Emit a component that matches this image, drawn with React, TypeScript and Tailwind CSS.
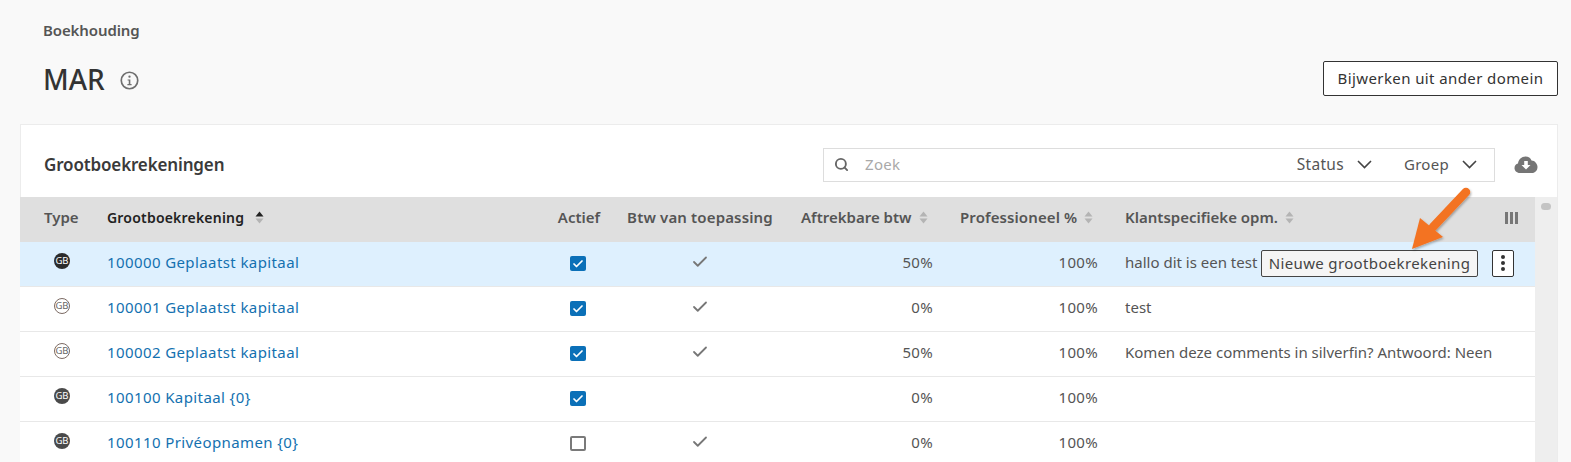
import React from "react";
import { Search, Check } from "lucide-react";

const rows = [
  { dark: "bg-[#2b2b2b]", outline: false, name: "100000 Geplaatst kapitaal", a: true, b: true, p: "50%", q: "100%", c: "hallo dit is een test", hi: true },
  { dark: "", outline: true, name: "100001 Geplaatst kapitaal", a: true, b: true, p: "0%", q: "100%", c: "test", hi: false },
  { dark: "", outline: true, name: "100002 Geplaatst kapitaal", a: true, b: true, p: "50%", q: "100%", c: "Komen deze comments in silverfin? Antwoord: Neen", hi: false },
  { dark: "bg-[#4a4a4a]", outline: false, name: "100100 Kapitaal {0}", a: true, b: false, p: "0%", q: "100%", c: "", hi: false },
  { dark: "bg-[#4a4a4a]", outline: false, name: "100110 Privéopnamen {0}", a: false, b: true, p: "0%", q: "100%", c: "", hi: false },
];

const cols = "grid grid-cols-[74px_447px_73px_172px_159px_165px_425px]";

function Sort({ active }: { active?: boolean }) {
  return (
    <svg width="9" height="13" viewBox="0 0 9 13" className={`${active ? "ml-[11px]" : "ml-[7px]"} shrink-0`}>
      <path d="M4.5 0.5 L8.5 5.5 H0.5 Z" fill={active ? "#222222" : "#b4b4b4"} />
      <path d="M4.5 12.5 L8.5 7.5 H0.5 Z" fill="#b4b4b4" />
    </svg>
  );
}

function Chevron() {
  return (
    <svg width="15" height="9" viewBox="0 0 15 9" className="shrink-0">
      <path d="M1 1 L7.5 7.5 L14 1" fill="none" stroke="#444444" strokeWidth="1.6" />
    </svg>
  );
}

function Badge({ cls, outline }: { cls: string; outline: boolean }) {
  return (
    <div
      className={`w-[16px] h-[16px] rounded-full flex items-center justify-center text-[9.5px] leading-none tracking-[-0.1px] ${
        outline ? "border border-[#7b6a63] text-[#666666] bg-white" : `${cls} text-white`
      }`}
    >
      GB
    </div>
  );
}

function Box({ on }: { on: boolean }) {
  return on ? (
    <div className="w-[16px] h-[15px] rounded-[2px] bg-[#0b70b8] flex items-center justify-center">
      <Check size={12} strokeWidth={3.5} className="text-white" />
    </div>
  ) : (
    <div className="w-[16px] h-[15px] rounded-[2px] border-2 border-[#7a7a7a] bg-white" />
  );
}

export default function App() {
  return (
    <div className="relative w-[1571px] h-[462px] overflow-hidden bg-[#f9f9f9] font-['Noto_Sans',sans-serif] text-[15px] tracking-[0.3px] text-[#555555]">
      <div className="pl-[43px] pt-[21px] text-[15px] tracking-[-0.1px] leading-[19px] font-semibold text-[#555555]">Boekhouding</div>
      <div className="flex items-start justify-between pl-[43px] pr-[13px] mt-[21px] h-[36px]">
        <div className="flex items-center h-[36px]">
          <span className="text-[28px] tracking-normal font-medium leading-none text-[#333333]">MAR</span>
          <svg width="19" height="19" viewBox="0 0 18 18" className="ml-[15px] mt-[2px]">
            <circle cx="9" cy="9" r="7.8" fill="none" stroke="#6f6f6f" strokeWidth="1.6" />
            <circle cx="9" cy="5.4" r="1.1" fill="#6f6f6f" />
            <path d="M7.2 8 H9.8 V12.4 H11 V13.4 H7 V12.4 H8.3 V9 H7.2 Z" fill="#6f6f6f" />
          </svg>
        </div>
        <button className="h-[35px] w-[235px] border border-[#333333] rounded-[2px] bg-white text-[15px] text-[#333333] tracking-[0.4px]">
          Bijwerken uit ander domein
        </button>
      </div>

      <div className="ml-[20px] mt-[27px] w-[1538px] h-[400px] bg-white border-t border-l border-r border-[#ececec]">
        <div className="h-[72px] flex items-center pl-[23px] pr-[19px] pt-[7px]">
          <span className="text-[17px] tracking-[-0.15px] font-semibold text-[#3a3a3a]">Grootboekrekeningen</span>
          <div className="ml-auto mr-[19px] w-[672px] h-[34px] border border-[#dddddd] flex items-center pl-[10px] pr-[17px]">
            <Search size={15} strokeWidth={3} className="text-[#666666]" />
            <span className="ml-[16px] text-[#a9a9a9]">Zoek</span>
            <span className="ml-auto text-[15.5px]">Status</span>
            <span className="ml-[13px]"><Chevron /></span>
            <span className="ml-[32px]">Groep</span>
            <span className="ml-[13px]"><Chevron /></span>
          </div>
          <svg width="24" height="18" viewBox="0 0 24 18" className="shrink-0">
            <path d="M6 17 C2.5 17 0.5 14.5 0.5 12 C0.5 9.5 2 8 4 7.5 C4.5 3.5 7.5 0.5 11.5 0.5 C14.5 0.5 16.5 2 17.5 4.5 C21 4.5 23.5 8 23.5 11 C23.5 14.5 21 17 18 17 Z" fill="#757575" />
            <path d="M10.2 5 H13.8 V9 H16.5 L12 13.5 L7.5 9 H10.2 Z" fill="#ffffff" />
          </svg>
        </div>

        <div className="flex">
          <div className="w-[1515px] -ml-px">
            <div className={`${cols} h-[45px] pb-[4px] items-center bg-[#dfdfdf] font-semibold tracking-normal`}>
              <div className="pl-[24px]">Type</div>
              <div className="pl-[13px] flex items-center text-[14px] tracking-[0.2px] text-[#222222]">Grootboekrekening<Sort active /></div>
              <div className="text-center pl-[3px]">Actief</div>
              <div className="text-center tracking-[0.15px]">Btw van toepassing</div>
              <div className="pl-[15px] flex items-center">Aftrekbare btw<Sort /></div>
              <div className="pl-[15px] flex items-center tracking-[0.1px]">Professioneel %<Sort /></div>
              <div className="pl-[15px] pr-[16px] flex items-center">
                Klantspecifieke opm.<Sort />
                <svg width="14" height="12" viewBox="0 0 14 12" className="ml-auto">
                  <rect x="0" width="3" height="12" fill="#777777" />
                  <rect x="5" width="3" height="12" fill="#777777" />
                  <rect x="10" width="3" height="12" fill="#777777" />
                </svg>
              </div>
            </div>
            {rows.map((r) => (
              <div key={r.name} className={`${cols} h-[45px] items-center border-b border-[#e8e8e8] ${r.hi ? "bg-[#def0fe]" : "bg-white"}`}>
                <div className="pl-[34px] pb-[6px]"><Badge cls={r.dark} outline={r.outline} /></div>
                <div className="pl-[13px] pb-[4px] tracking-[0.4px] text-[#1471b0]">{r.name}</div>
                <div className="flex justify-center pb-[1px]"><Box on={r.a} /></div>
                <div className="flex justify-center pb-[4px]">
                  {r.b && <Check size={18} strokeWidth={2.4} className="text-[#777777]" />}
                </div>
                <div className="text-right pr-[12px] pb-[4px]">{r.p}</div>
                <div className="text-right pr-[12px] pb-[4px]">{r.q}</div>
                <div className="relative pl-[15px] pb-[4px] tracking-normal whitespace-nowrap">
                  {r.c}
                  {r.hi && (
                    <>
                      <div className="absolute left-[151px] top-[-1px] h-[27px] w-[217px] flex items-center justify-center rounded-[2px] border border-[#444444] bg-[#f5f5f5] text-[15px] tracking-[0.35px] text-[#444444]">
                        Nieuwe grootboekrekening
                      </div>
                      <div className="absolute left-[382px] top-[-1px] w-[22px] h-[27px] flex flex-col items-center justify-center gap-[2px] rounded-[2px] border border-[#333333] bg-white">
                        <span className="w-[4px] h-[4px] rounded-full bg-[#333333]" />
                        <span className="w-[4px] h-[4px] rounded-full bg-[#333333]" />
                        <span className="w-[4px] h-[4px] rounded-full bg-[#333333]" />
                      </div>
                    </>
                  )}
                </div>
              </div>
            ))}
          </div>
          <div className="w-[22px] bg-[#eeeeee] pt-[6px] flex justify-center">
            <div className="w-[10px] h-[7px] rounded-full bg-[#c4c4c4]" />
          </div>
        </div>
      </div>

      <svg width="70" height="70" viewBox="0 0 70 70" className="absolute left-[1405px] top-[183px]">
        <defs>
          <filter id="s" x="-20%" y="-20%" width="140%" height="140%">
            <feDropShadow dx="1" dy="1.5" stdDeviation="1.2" floodColor="#000000" floodOpacity="0.3" />
          </filter>
        </defs>
        <g filter="url(#s)">
          <path d="M61 9 L28 44" stroke="#f37321" strokeWidth="8.5" strokeLinecap="round" fill="none" />
          <path d="M7 66 L15 35 L38 54 Z" fill="#f37321" />
        </g>
      </svg>
    </div>
  );
}
